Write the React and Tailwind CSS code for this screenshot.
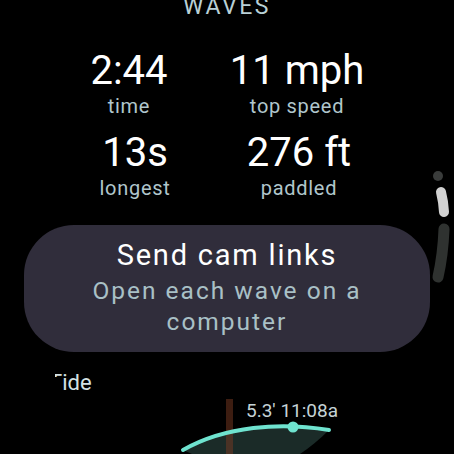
import React from 'react';

/** Session summary rows shown on the watch */
const ROWS = [
  { ml: 'ml-[49px]', gap: 'gap-[8px]', items: [{ value: '2:44', label: 'time' }, { value: '11 mph', label: 'top speed' }] },
  { ml: 'ml-[55px]', gap: 'gap-[4px]', items: [{ value: '13s', label: 'longest' }, { value: '276 ft', label: 'paddled' }] },
];

function ScrollIndicator() {
  return (
    <svg className="absolute inset-0 pointer-events-none" width="454" height="454" viewBox="0 0 454 454">
      <circle cx="438" cy="176" r="5" fill="#3a3c3b" />
      <path d="M441 192 Q 443.5 202 444 212" stroke="#d2d2d2" strokeWidth="10" strokeLinecap="round" fill="none" />
      <path d="M444 229 Q 443 255 438 277" stroke="#2f3230" strokeWidth="11" strokeLinecap="round" fill="none" />
    </svg>
  );
}

function TideChart() {
  return (
    <div className="relative w-full h-[58px]">
      <svg className="absolute inset-0" width="454" height="58" viewBox="0 0 454 58">
        <path d="M183 54 C 225 30 280 26 329 34 Q 315 48 300 58 L 192 58 Z" fill="#1b2b28" />
        <rect x="226" y="3" width="7" height="55" fill="#7a3a22" opacity="0.5" />
        <path d="M183 54 C 225 30 280 26 329 34" stroke="#6fe3cf" strokeWidth="4" strokeLinecap="round" fill="none" />
        <circle cx="293" cy="31" r="5.5" fill="#6fe3cf" />
      </svg>
      <div className="absolute left-[246px] top-[4px] text-[19px] leading-[22px] text-[#c5d3d6] whitespace-nowrap">
        5.3' 11:08a
      </div>
    </div>
  );
}

export default function App() {
  return (
    <div className="w-[454px] h-[454px] bg-black overflow-hidden relative" style={{ fontFamily: 'Roboto, "Noto Sans", sans-serif' }}>
      <div className="flex flex-col">
        <p className="-mt-[4px] self-center text-[23px] leading-[22px] tracking-[2.5px] text-[#b9d0d6]">WAVES</p>

        {/* Stats */}
        <div className="mt-[33px] flex flex-col gap-[15px]">
          {ROWS.map((row, i) => (
            <div key={i} className={`flex ${row.ml} ${row.gap}`}>
              {row.items.map((s) => (
                <div key={s.label} className="w-[160px] flex flex-col items-center">
                  <span className="text-[40px] leading-[40px] text-white">{s.value}</span>
                  <span className="mt-[3px] text-[20px] leading-[24px] tracking-[0.7px] text-[#b0c6cc]">{s.label}</span>
                </div>
              ))}
            </div>
          ))}
        </div>

        {/* Action chip */}
        <div className="mt-[25px] ml-[24px] w-[406px] h-[127px] rounded-[50px] bg-[#302d3b] flex flex-col items-center pt-[13px]">
          <span className="text-[29px] leading-[34px] tracking-[1.8px] text-white">Send cam links</span>
          <span className="mt-[3px] text-[24.5px] leading-[31px] tracking-[2px] text-[#a9c0c6] text-center w-[320px]">
            Open each wave on a computer
          </span>
        </div>
      </div>

      {/* Tide */}
      <div className="relative mt-[18px] pl-[49px]">
        <p className="text-[22px] leading-[26px] text-[#d3e1e4]">Tide</p>
        <div className="absolute left-0 top-0 w-[55px] h-[26px] bg-black" />
        <div className="absolute left-[54px] top-[7px] w-[7px] h-[19px] bg-black" />
      </div>
      <TideChart />

      <ScrollIndicator />
    </div>
  );
}
